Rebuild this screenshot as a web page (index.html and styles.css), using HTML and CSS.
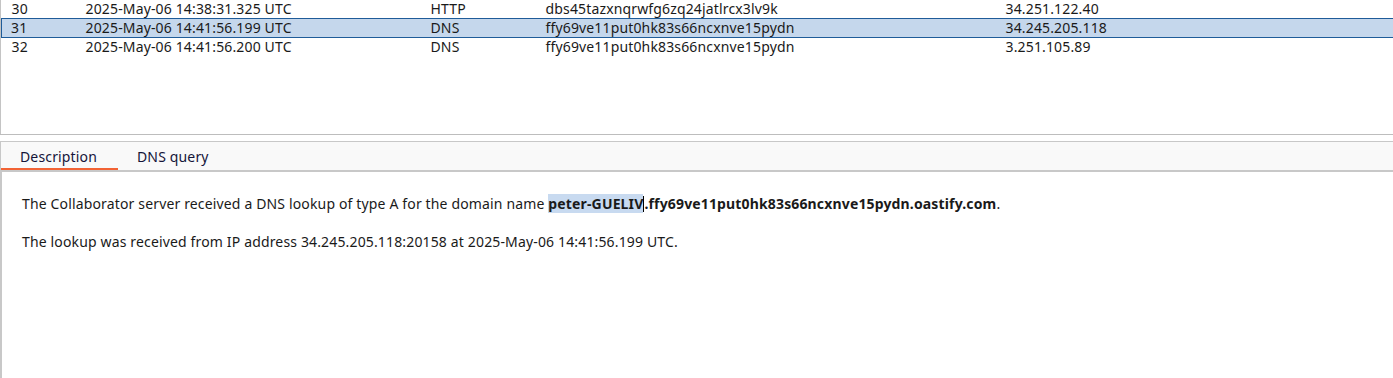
FILE: index.html
```html
<!DOCTYPE html>
<html lang="en">
<head>
    <meta charset="UTF-8">
    <title>Collaborator interactions</title>
    <link rel="stylesheet" href="styles.css">
</head>
<body>

    <!-- Interactions table -->
    <div class="table-panel">
        <table class="interactions">
            <tbody>
                <tr>
                    <td class="col-num">30</td>
                    <td class="col-time">2025-May-06 14:38:31.325 UTC</td>
                    <td class="col-type">HTTP</td>
                    <td class="col-payload">dbs45tazxnqrwfg6zq24jatlrcx3lv9k</td>
                    <td class="col-ip">34.251.122.40</td>
                </tr>
                <tr class="selected">
                    <td class="col-num">31</td>
                    <td class="col-time">2025-May-06 14:41:56.199 UTC</td>
                    <td class="col-type">DNS</td>
                    <td class="col-payload">ffy69ve11put0hk83s66ncxnve15pydn</td>
                    <td class="col-ip">34.245.205.118</td>
                </tr>
                <tr>
                    <td class="col-num">32</td>
                    <td class="col-time">2025-May-06 14:41:56.200 UTC</td>
                    <td class="col-type">DNS</td>
                    <td class="col-payload">ffy69ve11put0hk83s66ncxnve15pydn</td>
                    <td class="col-ip">3.251.105.89</td>
                </tr>
            </tbody>
        </table>
    </div>

    <!-- Split divider -->
    <div class="divider"></div>

    <!-- Tabs -->
    <div class="tabs">
        <div class="tab active">Description</div>
        <div class="tab">DNS query</div>
    </div>

    <!-- Description -->
    <div class="details">
        <p>The Collaborator server received a DNS lookup of type A for the domain name <strong><span class="sel">peter-GUELIV</span><span class="caret"></span>.ffy69ve11put0hk83s66ncxnve15pydn.oastify.com</strong>.</p>
        <p>The lookup was received from IP address 34.245.205.118:20158 at 2025-May-06 14:41:56.199 UTC.</p>
    </div>

</body>
</html>
```

FILE: styles.css
```css
* {
    margin: 0;
    padding: 0;
    box-sizing: border-box;
}

body {
    font-family: "Noto Sans", "Open Sans", sans-serif;
    font-size: 14px;
    letter-spacing: 0.15px;
    color: #1a1a1a;
    background-color: #fff;
    width: 1393px;
    height: 378px;
    overflow: hidden;
    display: flex;
    flex-direction: column;
}

/* Table panel */
.table-panel {
    height: 134px;
    border-left: 1px solid #c4c4c4;
    overflow: hidden;
}

.interactions {
    width: 1400px;
    border-collapse: collapse;
    margin-top: -1px;
    table-layout: fixed;
}

.interactions td {
    height: 19px;
    padding: 0;
    white-space: nowrap;
    line-height: 17px;
}

.interactions .col-num {
    width: 84px;
    padding-left: 10px;
}

.interactions .col-time {
    width: 345px;
}

.interactions .col-type {
    width: 115px;
}

.interactions .col-payload {
    width: 460px;
}

.interactions tr.selected td {
    background-color: #c5d7ec;
    border-top: 1px solid #1f5c99;
    border-bottom: 1px solid #1f5c99;
}

.interactions tr.selected td.col-num {
    border-left: 1px solid #1f5c99;
    padding-left: 9px;
}

/* Divider */
.divider {
    height: 8px;
    border-top: 1px solid #bdbdbd;
    border-bottom: 1px solid #c8c8c8;
    background-color: #fff;
}

/* Tabs */
.tabs {
    display: flex;
    height: 30px;
    background-color: #f9f9f9;
    border-bottom: 2px solid #c8c8c8;
    border-left: 1px solid #c8c8c8;
}

.tab {
    padding: 5px 0 0 0;
    color: #15153a;
    height: 28px;
}

.tab.active {
    width: 117px;
    padding-left: 19px;
    border-bottom: 2px solid #f26335;
}

.tab:not(.active) {
    padding-left: 19px;
}

/* Description */
.details {
    flex: 1;
    border-left: 2px solid #c8c8c8;
    padding: 22px 0 0 20px;
}

.details p {
    line-height: 20px;
    margin-bottom: 18px;
}

.details strong {
    font-weight: bold;
}

.sel {
    background-color: #c8daf0;
}

.caret {
    display: inline-block;
    width: 1px;
    height: 16px;
    background-color: #000;
    vertical-align: -3px;
}
```
